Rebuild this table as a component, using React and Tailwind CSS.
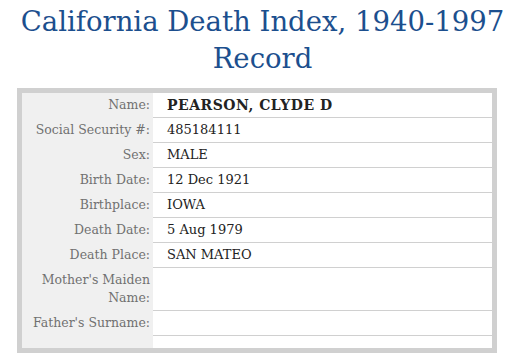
export default function App() {
  const rows = [
    ["Name:", "PEARSON, CLYDE D", true],
    ["Social Security #:", "485184111"],
    ["Sex:", "MALE"],
    ["Birth Date:", "12 Dec 1921"],
    ["Birthplace:", "IOWA"],
    ["Death Date:", "5 Aug 1979"],
    ["Death Place:", "SAN MATEO"],
    ["Mother's Maiden Name:", ""],
    ["Father's Surname:", ""],
  ];
  return (
    <div className="w-[525px] h-[362px] bg-white overflow-hidden [font-family:'DejaVu_Serif',serif]">
      <div className="pt-[3px] text-center text-[27.5px] leading-[37px] text-[#1c4f8e] font-normal [font-family:'DejaVu_Serif',serif]">
        <div>California Death Index, 1940-1997</div>
        <div>Record</div>
      </div>
      <div className="mt-[11px] ml-[17px] w-[480px] border-[5px] border-[#d0d0d0] bg-[#f0f0f0]">
        <div className="grid grid-cols-[131px_339px] leading-[18px]">
          {rows.map(([label, value, bold], i) => (
            <div key={i} className="contents">
              <div className="pr-[3px] pl-[4px] pt-[3px] pb-[4px] text-right text-[12.5px] text-[#707070]">{label}</div>
              <div className={"bg-white border-b border-[#d0d0d0] pl-[14px] pt-[3px] pb-[3px] text-[#222] " + (bold ? "font-bold text-[14px] tracking-[0.5px]" : "text-[13px]")}>{value}</div>
            </div>
          ))}
          <div className="h-[12px]"></div>
          <div className="h-[12px] bg-white"></div>
        </div>
      </div>
    </div>
  );
}
